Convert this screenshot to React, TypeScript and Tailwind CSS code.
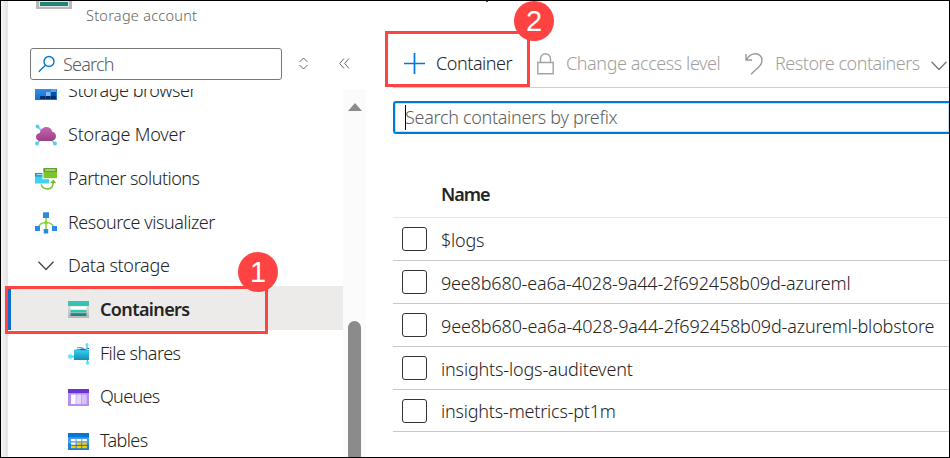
import type { ReactNode } from "react";

function StorageBrowserIcon() {
  return (
    <svg className="-mt-[2px]" width="22" height="20" viewBox="0 0 22 20">
      <defs>
        <linearGradient id="sb" x1="0" y1="0" x2="0" y2="1">
          <stop offset="0" stopColor="#5ea0ef" />
          <stop offset="1" stopColor="#0a73d4" />
        </linearGradient>
      </defs>
      <rect width="22" height="20" fill="url(#sb)" />
      <rect x="11" y="12" width="4.500" height="4" fill="#83b9f9" />
      <rect x="16" y="12" width="5" height="4" fill="#0d4fa0" />
      <rect x="16" y="8" width="5" height="4" fill="#5ea0ef" />
      <rect x="5" y="16" width="5" height="3" fill="#032d6b" />
      <rect x="10.500" y="16" width="5" height="3" fill="#032d6b" />
      <rect x="16" y="16" width="5" height="3" fill="#032d6b" />
    </svg>
  );
}

function MoverIcon() {
  return (
    <svg width="22" height="22" viewBox="0 0 22 22">
      <defs>
        <linearGradient id="mv" x1="0" y1="0" x2="0" y2="1">
          <stop offset="0" stopColor="#c765b0" />
          <stop offset="1" stopColor="#9b3f88" />
        </linearGradient>
      </defs>
      <path d="M2.500 2.500 9 9M2 19.500l5-5M20 19.500l-5-5" stroke="#5bd0ee" strokeWidth="1.500" />
      <circle cx="2.500" cy="2.500" r="1.900" fill="#50cfef" />
      <circle cx="2" cy="19.500" r="1.900" fill="#50cfef" />
      <circle cx="20" cy="19.500" r="1.900" fill="#50cfef" />
      <path
        d="M5.500 17C2.800 17 1 15.300 1 13c0-2.200 1.600-3.700 3.800-4C5.400 5.500 8 3 11.300 3c3 0 5.300 1.900 6 4.800C19.600 8.200 21 10 21 12.300 21 15 19 17 16.200 17z"
        fill="url(#mv)"
      />
    </svg>
  );
}

function PartnerIcon() {
  return (
    <svg width="22" height="22" viewBox="0 0 22 22">
      <rect x="0" y="5" width="14" height="10.500" fill="#3fd2f0" />
      <rect x="0" y="5" width="14" height="3.500" fill="#1c94b4" />
      <rect x="1.500" y="6" width="6" height="1.200" fill="#9be4f5" />
      <rect x="7.500" y="0" width="14.500" height="11.200" fill="#fff" />
      <rect x="8.500" y="0.200" width="13.500" height="10" fill="#7cc52b" />
      <rect x="8.500" y="0.200" width="13.500" height="3.500" fill="#5a9626" />
      <rect x="10" y="1.400" width="10.500" height="1.300" fill="#cde9ac" />
      <path d="M6 16.500c1.500 3 3.500 4.500 6.200 4.500 4 0 6-3 6-7" fill="none" stroke="#76bc2d" strokeWidth="1.500" />
      <path d="M15.300 15 18.300 11.500l3 3.500z" fill="#76bc2d" />
    </svg>
  );
}

function VisualizerIcon() {
  return (
    <svg width="22" height="22" viewBox="0 0 22 22">
      <path d="M11 5v13M3 16c1-3.500 4-5.500 8-5.500s7 2 8 5.500" fill="none" stroke="#86d633" strokeWidth="1.500" />
      <rect x="8" y="0.300" width="6" height="5.700" fill="#2b88e6" />
      <rect x="0" y="14" width="5" height="5" fill="#2b88e6" />
      <rect x="8.700" y="17" width="4.500" height="4.500" fill="#2b88e6" />
      <rect x="17" y="14" width="5" height="5" fill="#2b88e6" />
      <circle cx="11" cy="10.500" r="1.700" fill="#86d633" />
    </svg>
  );
}

function ContainersIcon() {
  return (
    <svg width="21" height="18" viewBox="0 0 21 18">
      <defs>
        <linearGradient id="cn" x1="0" y1="0" x2="0" y2="1">
          <stop offset="0" stopColor="#f0f0f0" />
          <stop offset="1" stopColor="#b5b5b5" />
        </linearGradient>
      </defs>
      <rect width="21" height="17" rx="0.500" fill="url(#cn)" />
      <rect width="21" height="5" fill="#37c2b1" />
      <rect x="2.500" y="5.500" width="16" height="3" fill="#fff" />
      <rect x="2.500" y="9" width="16" height="2.500" fill="#37c2b1" />
      <rect x="2.500" y="12.200" width="16" height="2.800" fill="#258277" />
    </svg>
  );
}

function FileSharesIcon() {
  return (
    <svg width="21" height="22" viewBox="0 0 21 22">
      <defs>
        <linearGradient id="fs" x1="0" y1="0" x2="0" y2="1">
          <stop offset="0" stopColor="#32d4f5" />
          <stop offset="1" stopColor="#198ab3" />
        </linearGradient>
      </defs>
      <path d="M2 13.500h5M19 2v4M19.500 15v4" stroke="#4fb8d8" strokeWidth="1.300" />
      <path d="M9 4.500 14 4l2.500 1H21v4H8z" fill="#0f6cbd" />
      <path d="M8.500 5.800 15 4.800l6 2" fill="none" stroke="#fff" strokeWidth="1" />
      <path d="M6 6.500h5.500L13 7.200h8v9.800H6z" fill="url(#fs)" />
      <circle cx="2.200" cy="13.500" r="2.200" fill="#50e6ff" />
      <circle cx="19" cy="1.700" r="1.600" fill="#50e6ff" />
      <circle cx="19.500" cy="20" r="1.700" fill="#50e6ff" />
    </svg>
  );
}

function QueuesIcon() {
  return (
    <svg width="21" height="17" viewBox="0 0 21 17">
      <rect width="21" height="17" rx="0.500" fill="#b490f5" />
      <rect width="21" height="4" fill="#6c33cf" />
      <rect x="3" y="5.500" width="4.700" height="9.500" fill="#fff" />
      <rect x="8.300" y="5.500" width="4.900" height="9.500" fill="#e6d8fb" />
      <rect x="13.800" y="5.500" width="4.900" height="9.500" fill="#d6c1f9" />
    </svg>
  );
}

function TablesIcon() {
  return (
    <svg width="21" height="17" viewBox="0 0 21 17">
      <rect width="21" height="17" rx="0.500" fill="#1b82dc" />
      <rect width="21" height="4.500" fill="#0078d4" />
      <rect y="4.500" width="21" height="6" fill="#4a9cec" />
      {[3, 8.6, 14.2].map((x) => (
        <g key={x}>
          <rect x={x} y="6" width="4.600" height="2.200" fill="#fff" />
          <rect x={x} y="9.500" width="4.600" height="2.300" fill={x === 3 ? "#fff" : "#ffca00"} />
          <rect x={x} y="13" width="4.600" height="2.200" fill="#ffca00" />
        </g>
      ))}
    </svg>
  );
}

function Chevron({ color }: { color: string }) {
  return (
    <svg className="shrink-0" width="16" height="10" viewBox="0 0 16 10" fill="none" stroke={color} strokeWidth="1.300">
      <path d="M0.500 0.700 8 8.500l7.500-7.800" />
    </svg>
  );
}

function NavItem({ icon, children, className }: { icon: ReactNode; children: ReactNode; className: string }) {
  return (
    <div className={`flex h-11 shrink-0 items-center gap-[11px] ${className}`}>
      <span className="flex shrink-0 justify-center">{icon}</span>
      <span className="pb-px whitespace-nowrap">{children}</span>
    </div>
  );
}

const rows = [
  { name: "$logs", cls: "h-[43px] tracking-[-0.2px]" },
  { name: "9ee8b680-ea6a-4028-9a44-2f692458b09d-azureml", cls: "h-[43px] tracking-[-0.18px]" },
  { name: "9ee8b680-ea6a-4028-9a44-2f692458b09d-azureml-blobstore", cls: "h-[43px] tracking-[-0.15px]" },
  { name: "insights-logs-auditevent", cls: "h-[43px] tracking-[-0.16px]" },
  { name: "insights-metrics-pt1m", cls: "h-[42px] tracking-[-0.2px]" },
];

function Sidebar() {
  return (
    <aside className="flex w-[358px] shrink-0 flex-col">
      <div className="flex h-[47px] pl-7">
        <svg width="36" height="8" viewBox="0 0 36 8">
          <rect width="36" height="8" fill="#b8b8b8" />
          <rect x="3" width="30" height="6" fill="#e5e5e5" />
          <rect x="4" y="1" width="28" height="4" fill="#258277" />
        </svg>
        <span className="mt-1 ml-[14px] text-[14.5px] leading-5 tracking-[0.26px] text-[#646464]">Storage account</span>
      </div>
      <div className="flex h-[41px] items-start pl-[22px]">
        <div className="flex h-8 w-[252px] items-center rounded-[3px] border border-[#777] pl-[7px]">
          <svg width="18" height="18" viewBox="0 0 18 18" fill="none" stroke="#0078d4" strokeWidth="1.400">
            <circle cx="11" cy="6.500" r="5" />
            <path d="M7.300 10.200.8 16.800" />
          </svg>
          <span className="ml-[7px] text-[18px] leading-6 tracking-[-0.8px] text-[#5c5c5c]">Search</span>
        </div>
        <svg className="mt-[9px] ml-[17px]" width="9" height="13" viewBox="0 0 9 13" fill="none" stroke="#666">
          <path d="M.5 5 4.500 1l4 4M.5 8l4 4 4-4" />
        </svg>
        <svg className="mt-[10px] ml-[31px]" width="11" height="11" viewBox="0 0 11 11" fill="none" stroke="#666">
          <path d="M5 .5 0.700 5.500 5 10.500M10 .5 5.700 5.500 10 10.500" />
        </svg>
      </div>
      <div className="flex h-[368px] overflow-hidden text-[18px] text-[#252423]">
        <nav className="-mt-5 flex w-[335px] flex-col">
          <NavItem icon={<StorageBrowserIcon />} className="pl-[27px] tracking-[-0.45px]">Storage browser</NavItem>
          <NavItem icon={<MoverIcon />} className="pl-[27px] tracking-[-0.2px]">Storage Mover</NavItem>
          <NavItem icon={<PartnerIcon />} className="pl-[27px] tracking-[-0.5px]">Partner solutions</NavItem>
          <NavItem icon={<VisualizerIcon />} className="pl-[27px] tracking-[-0.46px]">Resource visualizer</NavItem>
          <div className="flex h-[41px] shrink-0 items-center gap-[14px] pl-[30px]">
            <Chevron color="#444" />
            <span className="pb-px tracking-[-0.3px]">Data storage</span>
          </div>
          <div className="flex h-11 shrink-0 items-center gap-[11px] border-l-3 border-[#0f6cd0] bg-[#ecebea] pt-[3px] pl-[57px] font-semibold">
            <ContainersIcon />
            <span className="tracking-[-0.62px]">Containers</span>
          </div>
          <NavItem icon={<FileSharesIcon />} className="mt-[2px] pl-[60px] tracking-[-0.5px]">File shares</NavItem>
          <NavItem icon={<QueuesIcon />} className="-mt-px pl-[60px] tracking-[-0.7px]">Queues</NavItem>
          <NavItem icon={<TablesIcon />} className="pl-[60px] tracking-[-0.6px]">Tables</NavItem>
        </nav>
        <div className="flex w-[23px] flex-col items-start bg-[#fbfbfb] pl-[5px]">
          <svg className="mt-[14px] shrink-0" width="14" height="8" viewBox="0 0 14 8">
            <path d="M7 0 14 8H0z" fill="#8b8b8b" />
          </svg>
          <div className="mt-[210px] h-[160px] w-[13px] shrink-0 rounded-full bg-[#8b8b8b]" />
        </div>
      </div>
    </aside>
  );
}

function Main() {
  return (
    <main className="flex min-w-0 flex-1 flex-col pl-[27px] whitespace-nowrap">
      <div className="h-[39px] pl-[93px]">
        <div className="h-px w-[2px] bg-[#444]" />
      </div>
      <div className="flex h-[48px] items-center border-b border-[#d0d0d0] pl-[11px] text-[18px] text-[#a19f9d]">
        <svg width="21" height="21" viewBox="0 0 21 21" stroke="#0078d4" strokeWidth="1.700">
          <path d="M10.500 0v21M0 10.500h21" />
        </svg>
        <span className="ml-[11px] w-[76px] tracking-[-0.45px] text-[#252423]">Container</span>
        <svg className="ml-[25px] shrink-0" width="17" height="22" viewBox="0 0 17 22" fill="none" stroke="#a3a3a3" strokeWidth="1.400">
          <path d="M.8 9.500h15.400v11.300H.8zM3.500 9.500V5.800a5 5 0 0 1 10 0v3.700" />
        </svg>
        <span className="ml-[12px] w-[155px] shrink-0 tracking-[-0.42px]">Change access level</span>
        <svg className="ml-[24px] shrink-0" width="18" height="22" viewBox="0 0 18 22" fill="none" stroke="#999" strokeWidth="1.400">
          <path d="M1 1v6h6M1.500 6.500C4 2.500 7 .8 10.500.8c4 0 6.500 3 6.500 6.700 0 2.500-1 4.200-2.500 5.700L6 21.300" />
        </svg>
        <span className="ml-[12px] w-[156px] shrink-0 tracking-[-0.48px]">Restore containers</span>
        <span className="mt-1 flex shrink-0">
          <Chevron color="#777" />
        </span>
      </div>
      <div className="mt-[13px] flex h-[33px] shrink-0 items-center rounded-l-[3px] border-2 border-r-0 border-[#0078d4] pl-[10px] text-[18px] text-[#605e5c] shadow-[inset_0_0_0_1px_#c7e0f4]">
        <span className="h-[25px] w-px bg-black" />
        <span className="-ml-px tracking-[-0.31px]">Search containers by prefix</span>
      </div>
      <div className="flex h-[84px] shrink-0 items-end border-b border-[#e5e5e5] pb-[9px] pl-[48px] text-[18px] font-semibold text-[#252423]">
        <span className="tracking-[-1px]">Name</span>
      </div>
      {rows.map((r) => (
        <div key={r.name} className={`flex shrink-0 items-center border-b border-[#c8c8c8] pl-[9px] text-[18px] text-[#252423] ${r.cls}`}>
          <span className="h-[24px] w-[25px] rounded-[3px] border border-[#333]" />
          <span className="mt-[2px] ml-[14px]">{r.name}</span>
        </div>
      ))}
    </main>
  );
}

export default function App() {
  return (
    <div className="relative flex h-[458px] w-[950px] overflow-hidden border border-black bg-white font-['Noto_Sans',sans-serif] font-light">
      <div className="w-[7px] shrink-0 bg-linear-to-r from-[#f6f5f5] to-[#e4e4e4]" />
      <Sidebar />
      <Main />
      <div className="absolute top-[285px] left-[4px] h-[48px] w-[263px] border-3 border-[#ff4343]" />
      <div className="absolute top-[30px] left-[384px] h-[56px] w-[145px] border-3 border-[#ff4343]" />
      <div className="absolute top-[251px] left-[237px] flex size-10 items-center justify-center rounded-full bg-[#ff4343] pt-[2px] font-['Liberation_Sans',sans-serif] text-[29px] font-normal text-white">
        1
      </div>
      <div className="absolute top-0 left-[513px] flex size-10 items-center justify-center rounded-full bg-[#ff4343] pt-[2px] font-['Liberation_Sans',sans-serif] text-[29px] font-normal text-white">
        2
      </div>
    </div>
  );
}
